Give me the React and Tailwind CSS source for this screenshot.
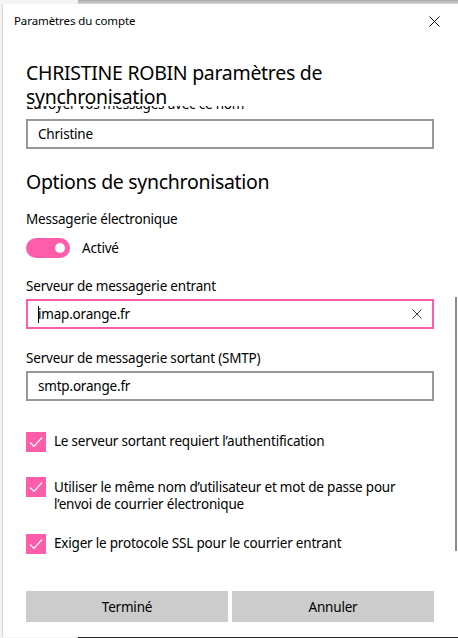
import React from "react";

const font = { fontFamily: '"Noto Sans", "Open Sans", sans-serif' };

function Check() {
  return (
    <div className="w-5 h-5 shrink-0 bg-[#fd5dab] flex items-center justify-center">
      <svg width="14" height="12" viewBox="0 0 14 12" fill="none">
        <path d="M1 6.5 L5 10.5 L13 1.5" stroke="white" strokeWidth="1.2" />
      </svg>
    </div>
  );
}

function TextBox({ value, active }) {
  return (
    <div
      className={
        "h-[30px] border-2 flex items-center pl-[10px] pr-[10px] text-[13.5px] tracking-[-0.2px] text-black " +
        (active ? "border-[#fd5dab]" : "border-[#999999]")
      }
    >
      {active && <span className="w-px h-[17px] bg-black -mr-px"></span>}
      <span className="flex-1">{value}</span>
      {active && (
        <svg width="10" height="10" viewBox="0 0 10 10">
          <path d="M0.5 0.5 L9.5 9.5 M9.5 0.5 L0.5 9.5" stroke="#444" strokeWidth="1" />
        </svg>
      )}
    </div>
  );
}

export default function App() {
  return (
    <div className="w-[458px] h-[638px] bg-[#f2f2f2] flex flex-col overflow-hidden" style={font}>
      <div className="h-1 flex shrink-0">
        <div className="w-[78px] bg-[#f4f4f4]"></div>
        <div className="flex-1 bg-gradient-to-b from-[#a8a8a8] to-[#d8d8d8]"></div>
      </div>
      <div className="relative flex-1 ml-[2px] bg-white border-l border-[#d9d9d9] flex flex-col">
        <div className="h-[34px] shrink-0 flex items-center justify-between pl-[11px] pr-[18px]">
          <span className="text-[11.5px] tracking-[-0.1px] text-black">Paramètres du compte</span>
          <svg width="11" height="11" viewBox="0 0 11 11">
            <path d="M0.5 0.5 L10.5 10.5 M10.5 0.5 L0.5 10.5" stroke="#111" strokeWidth="1" />
          </svg>
        </div>

        <div className="h-[45px] mt-[23px] shrink-0 pl-[23px] text-[19.5px] tracking-[-0.3px] leading-6 text-black relative z-10 bg-white">
          CHRISTINE ROBIN paramètres de
          <br />
          synchronisation
        </div>

        <div className="flex-1 overflow-hidden pl-[23px] pr-6 text-[13.5px] tracking-[-0.2px]">
          <div className="-mt-[12px] leading-5 text-black">Envoyer vos messages avec ce nom</div>
          <div className="mt-[5px]">
            <TextBox value="Christine" />
          </div>

          <div className="mt-[19px] text-[19.5px] tracking-[-0.3px] leading-7 text-black">Options de synchronisation</div>

          <div className="mt-[13px] leading-5 text-black">Messagerie électronique</div>
          <div className="mt-[9px] flex items-center gap-3">
            <div className="w-11 h-5 rounded-full bg-[#fd5dab] flex items-center justify-end pr-[5px]">
              <div className="w-[10px] h-[10px] rounded-full bg-white"></div>
            </div>
            <span className="text-black">Activé</span>
          </div>

          <div className="mt-[18px] leading-5 text-black">Serveur de messagerie entrant</div>
          <div className="mt-[3px]">
            <TextBox value="imap.orange.fr" active />
          </div>

          <div className="mt-[19px] leading-5 text-black">Serveur de messagerie sortant (SMTP)</div>
          <div className="mt-[3px]">
            <TextBox value="smtp.orange.fr" />
          </div>

          <div className="mt-[31px] flex items-start gap-2">
            <Check />
            <span className="leading-[18px] text-black">Le serveur sortant requiert l’authentification</span>
          </div>
          <div className="mt-[25px] flex items-start gap-2">
            <Check />
            <span className="mt-[2px] leading-[17px] text-black">
              Utiliser le même nom d’utilisateur et mot de passe pour
              <br />
              l’envoi de courrier électronique
            </span>
          </div>
          <div className="mt-[21px] flex items-start gap-2">
            <Check />
            <span className="leading-[18px] text-black">Exiger le protocole SSL pour le courrier entrant</span>
          </div>

          <div className="mt-[37px] flex gap-1">
            <button className="flex-1 h-[31px] bg-[#cccccc] text-black">Terminé</button>
            <button className="flex-1 h-[31px] bg-[#cccccc] text-black">Annuler</button>
          </div>
        </div>

        <div className="absolute right-[1px] top-[293px] w-[2px] h-[254px] bg-[#8a8a8a]"></div>
      </div>
      <div className="h-px flex shrink-0">
        <div className="w-[78px] bg-[#f4f4f4]"></div>
        <div className="flex-1 bg-[#2a2a2a]"></div>
      </div>
    </div>
  );
}
